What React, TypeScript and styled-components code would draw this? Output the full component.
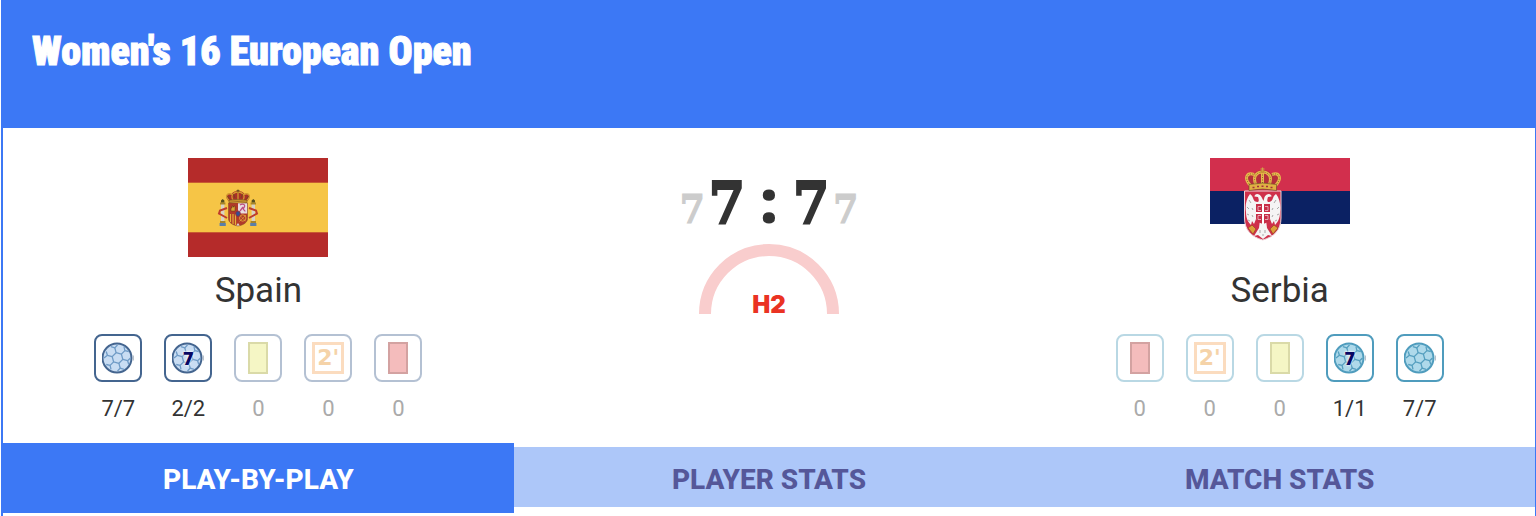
import { FC, ReactNode } from 'react';
import styled, { createGlobalStyle } from 'styled-components';

type Side = 'home' | 'away';
type StatKind = 'goal' | 'seven' | 'yellow' | 'suspension' | 'red';

interface StatItem {
  kind: StatKind;
  label: string;
  value: string;
}

const ballColors = {
  home: { line: '#44658f', seam: '#6f9bc6', fill: '#c9ddf3', off: '#b4c1d3' },
  away: { line: '#4f9cbd', seam: '#559fbf', fill: '#aed9ea', off: '#b9d8e4' },
};

const homeStats: StatItem[] = [
  { kind: 'goal', label: 'Goals', value: '7/7' },
  { kind: 'seven', label: '7-metre throws', value: '2/2' },
  { kind: 'yellow', label: 'Yellow cards', value: '0' },
  { kind: 'suspension', label: '2-minute suspensions', value: '0' },
  { kind: 'red', label: 'Red cards', value: '0' },
];

const awayStats: StatItem[] = [
  { kind: 'red', label: 'Red cards', value: '0' },
  { kind: 'suspension', label: '2-minute suspensions', value: '0' },
  { kind: 'yellow', label: 'Yellow cards', value: '0' },
  { kind: 'seven', label: '7-metre throws', value: '1/1' },
  { kind: 'goal', label: 'Goals', value: '7/7' },
];

const tabs = ['PLAY-BY-PLAY', 'PLAYER STATS', 'MATCH STATS'];

const SpainFlag: FC = () => (
  <FlagSvg viewBox="0 0 140 99" role="img" aria-label="Flag of Spain">
    <rect width="140" height="99" fill="#b52b2a" />
    <rect y="24.7" width="140" height="49.6" fill="#f6c546" />
    {/* pillars */}
    {[33, 63.6].map((x, i) => (
      <g key={x}>
        <rect x={x} y="46" width="3.4" height="17" fill="#d9d3c4" />
        <rect x={x - 1} y="44.5" width="5.4" height="2" fill="#a8862a" />
        <path d={`M${x} 44.500v-2l1.700-1.500 1.700 1.500v2z`} fill="#57501f" />
        <rect x={x - 1} y="63" width="5.4" height="2" fill="#a8862a" />
        <rect x={x - 1.4} y="65" width="6.2" height="3" fill="#5b7fa8" />
        <path
          d={i ? 'M61 50l7 2.500 1 3-8 4.500' : 'M39 50l-7 2.500-1 3 8 4.500'}
          fill="none"
          stroke="#bd3c2e"
          strokeWidth="2"
        />
      </g>
    ))}
    {/* crown */}
    <path d="M41 43.500c-5-5-2-9 2.500-7.500 1.500-2.500 4.500-3 6.500-3s5 .5 6.500 3c4.500-1.500 7.500 2.500 2.500 7.500z" fill="#a93127" />
    <path d="M41 42.500c-5-5-1-8 3-6M59 42.500c5-5 1-8-3-6M45 42c-3-5 1-8 5-8s8 3 5 8M50 34v8" fill="none" stroke="#d39a30" strokeWidth="1.300" />
    <path d="M39.500 38l2 3M60.500 38l-2 3M45.500 36l1.500 4M54.500 36l-1.500 4" stroke="#6b4a20" strokeWidth=".8" />
    <path d="M41 42.200q9-1.800 18 0v2.400q-9-1.800-18 0z" fill="#c7902e" stroke="#624b1e" strokeWidth=".5" />
    <path d="M50 31.500v3M48.500 32.600h3" stroke="#624b1e" strokeWidth=".9" />
    {/* shield */}
    <path d="M40.500 45h19v15.500c0 4-4 6.500-9.500 7.500-5.500-1-9.500-3.500-9.500-7.500z" fill="#b23a2a" />
    <path d="M50 45h9.500v10.500H50z" fill="#e9dbe1" />
    <path d="M52 47c3-2 6 0 4 2.500s1 2 1 4M52 53l3-4" fill="none" stroke="#bd4e83" strokeWidth="1.300" />
    <path d="M43 53v-3h1v-2h1v1h1v-1h1v5z" fill="#d9a637" stroke="#5c3c17" strokeWidth=".5" />
    <path d="M42.500 56v8M45 56v10M47.500 56v11.500" stroke="#e4b03b" strokeWidth="1.200" />
    <circle cx="54.700" cy="60" r="3.200" fill="none" stroke="#e4b03b" strokeWidth=".8" />
    <path d="M51.500 57l6.500 6.500M58 57l-6.500 6.500" stroke="#e4b03b" strokeWidth=".6" />
    <path d="M50 65l2 3h-4z" fill="#dbd2d5" />
    <ellipse cx="50" cy="55.700" rx="2.300" ry="2.800" fill="#334f91" stroke="#9c2b35" strokeWidth=".9" />
    <path d="M40.500 45h19v15.500c0 4-4 6.500-9.500 7.500-5.500-1-9.500-3.500-9.500-7.500z" fill="none" stroke="#8a4b25" strokeWidth=".6" />
  </FlagSvg>
);

const SerbiaFlag: FC = () => (
  <FlagSvg viewBox="0 0 140 99" role="img" aria-label="Flag of Serbia">
    <rect width="140" height="99" fill="#fff" />
    <rect width="140" height="33" fill="#d22f4d" />
    <rect y="33" width="140" height="33" fill="#0b2163" />
    {/* shield */}
    <path d="M34.500 33h36.500v27c0 12-7 19-18.250 22C41.500 79 34.500 72 34.500 60z" fill="#cf304b" stroke="#eed8dc" strokeWidth="1" />
    {/* eagle */}
    <g fill="#f5f4f4">
      <path d="M51.500 39c-2-4-7-4-7-.5l3.500.5c1 3 1 4 0 5-3 0-4-1-5-4-1-3-3-4-3-4-4 5-5 12-4 18 0 6 2 10 5 13l1-4 2 3 2-5 3 3h8l3-3 2 5 2-3 1 4c3-3 5-7 5-13 1-6 0-13-4-18 0 0-2 1-3 4-1 3-2 4-5 4-1-1-1-2 0-5l3.500-.5c0-3.500-5-3.500-7 .5l-1 4z" />
      <path d="M50 62h6l1 8 5 8-4-1-5 4-5-4-4 1 5-8z" />
    </g>
    <path d="M39 42l2 3M37 49l2 2M37 56l2 1M38 62l2 1M66 42l-2 3M69 49l-2 2M69 56l-2 1M67 62l-2 1M42 50l1 2M63 50l-1 2M42 57l1 2M63 57l-1 2M50 72v3M55 72v3M53 76v2" stroke="#888" strokeWidth=".7" />
    <path d="M38 70l4-3 4 4-3 5zM68 70l-4-3-4 4 3 5z" fill="#dca13a" stroke="#a3452a" strokeWidth=".8" />
    {/* cross */}
    <path d="M46 46h14v14c0 3-3 5-7 6-4-1-7-3-7-6z" fill="#c72d47" />
    <path d="M53 46v20M46 55h14" stroke="#fff" strokeWidth="2" />
    <path d="M51 48.500h-3v4h3M55 48.500h3v4h-3M51 57.500h-3v4h3M55 57.500h3v4h-3" fill="none" stroke="#f3d9df" strokeWidth=".7" />
    {/* crown */}
    <path d="M39 28c-6-8-2-14 5-12 2-3 5-4 8.500-4s7 1 9 4c7-2 11 4 5 12z" fill="#b52f3b" />
    <path d="M41 28c-8-8-4-14 3-11.500M65 28c8-8 4-14-3-11.500M46 27c-4-9 1-13 6.500-13s10.500 4 6.500 13M52.500 14v13" fill="none" stroke="#e6b94c" strokeWidth="3" />
    <path d="M41 28c-8-8-4-14 3-11.500M65 28c8-8 4-14-3-11.500M46 27c-4-9 1-13 6.500-13s10.500 4 6.500 13M52.500 14v13" fill="none" stroke="#614822" strokeWidth=".7" strokeDasharray="1 1.500" />
    <path d="M39 26.500q13.500-3 27.500 0v6q-14-3-27.500 0z" fill="#e0b044" stroke="#614822" strokeWidth=".6" />
    <path d="M42.500 29.500h2M47 28.500h2M51.500 28.200h2M56 28.500h2M60.500 29.500h2" stroke="#a3323b" strokeWidth="1.500" />
    <circle cx="52.500" cy="13.500" r="1.800" fill="#c89432" />
    <path d="M52.500 9.500v4M50.500 11h4" stroke="#d0a646" strokeWidth="1.200" />
  </FlagSvg>
);

const Ball: FC<{ side: Side }> = ({ side }) => {
  const { line, seam, fill } = ballColors[side];
  return (
    <svg width="32" height="32" viewBox="0 0 32 32" aria-hidden="true">
      <path d="M31.500 13.500v5" stroke="#b8c0c9" strokeWidth="1" />
      <circle cx="15" cy="16" r="14.500" fill={fill} stroke={line} strokeWidth="2" />
      <g fill="none" stroke={seam} strokeWidth="1.300" strokeLinejoin="round">
        <path d="M20.800 17.400L16.900 21.300 11.600 19.900 10.200 14.600 14.100 10.700 19.400 12.100z" />
        <path d="M20.800 17.400l4.800 1.300M16.900 21.300l1.300 4.800M11.600 19.900l-3.500 3.500M10.200 14.600l-4.800-1.300M14.100 10.700l-1.300-4.800M19.400 12.100l3.500-3.500" />
        <path d="M28.500 16l-2.900 2.700 1.200 3.800M22 27.300l-3.800-1.200-2.700 2.900M9 27.300l-.9-3.900-3.900-.9M2 16l3.400-2.700-1.200-3.800M9 4.700l3.800 1.200L15.500 3M22 4.700l.9 3.900 3.900.9" />
      </g>
    </svg>
  );
};

const StatIcon: FC<{ kind: StatKind; side: Side }> = ({ kind, side }) => {
  if (kind === 'yellow') return <PenaltyCard $fill="#f5f6c5" $edge="#dadaa8" />;
  if (kind === 'red') return <PenaltyCard $fill="#f4bcbc" $edge="#d3a2a1" />;
  if (kind === 'suspension') return <Suspension>2'</Suspension>;
  return (
    <BallIcon>
      <Ball side={side} />
      {kind === 'seven' && <BallNumber>7</BallNumber>}
    </BallIcon>
  );
};

interface TeamProps {
  name: string;
  side: Side;
  flag: ReactNode;
  stats: StatItem[];
}

const Team: FC<TeamProps> = ({ name, side, flag, stats }) => (
  <TeamColumn>
    {flag}
    <TeamName>{name}</TeamName>
    <StatList>
      {stats.map(({ kind, label, value }) => {
        const muted = value === '0';
        return (
          <Stat key={kind}>
            <Tile
              title={label}
              $edge={muted ? ballColors[side].off : ballColors[side].line}
            >
              <StatIcon kind={kind} side={side} />
            </Tile>
            <StatValue $muted={muted}>{value}</StatValue>
          </Stat>
        );
      })}
    </StatList>
  </TeamColumn>
);

const App: FC = () => (
  <>
    <GlobalStyle />
    <Page>
      <Header>
        <Title>Women's 16 European Open</Title>
      </Header>
      <Board>
        <Team name="Spain" side="home" flag={<SpainFlag />} stats={homeStats} />
        <ScoreColumn>
          <Score>
            <HalfScore>7</HalfScore>
            <Goals>7</Goals>
            <Colon>:</Colon>
            <Goals>7</Goals>
            <HalfScore>7</HalfScore>
          </Score>
          <Clock>
            <svg width="140" height="70" viewBox="0 0 140 70" aria-hidden="true">
              <path d="M6 70a64 64 0 0 1 128 0" fill="none" stroke="#f9cdcd" strokeWidth="12" />
            </svg>
            <Period>H2</Period>
          </Clock>
        </ScoreColumn>
        <Team name="Serbia" side="away" flag={<SerbiaFlag />} stats={awayStats} />
      </Board>
      <Tabs role="tablist">
        {tabs.map((tab, i) => (
          <Tab key={tab} type="button" role="tab" aria-selected={i === 0} $active={i === 0}>
            {tab}
          </Tab>
        ))}
      </Tabs>
    </Page>
  </>
);

export default App;

const GlobalStyle = createGlobalStyle`
  * {
    box-sizing: border-box;
  }

  body {
    margin: 0;
    background: #fff;
    color: #333;
    font-family: Roboto, 'Liberation Sans', sans-serif;
  }
`;

const Page = styled.main`
  min-height: 100vh;
  margin-left: 1px;
  border-left: 2px solid #3c78f5;
  border-right: 1px solid #3c78f5;
`;

const Header = styled.header`
  background: #3c78f5;
  padding: 24px 29px 48px;
`;

const Title = styled.h1`
  margin: 0;
  color: #fff;
  font-family: 'Roboto Condensed', Roboto, sans-serif;
  font-size: 40px;
  line-height: 56px;
  font-weight: 900;
  -webkit-text-stroke: 1px #fff;
`;

const Board = styled.section`
  display: grid;
  grid-template-columns: repeat(3, 1fr);
`;

const TeamColumn = styled.div`
  display: flex;
  flex-direction: column;
  align-items: center;
  padding: 30px 0 19px;
`;

const FlagSvg = styled.svg`
  display: block;
  width: 140px;
  height: 99px;
`;

const TeamName = styled.h2`
  margin: 12px 0 21px;
  font-size: 35px;
  line-height: 44px;
  font-weight: 400;
`;

const StatList = styled.ul`
  display: flex;
  gap: 22px;
  margin: 0;
  padding: 0;
  list-style: none;
`;

const Stat = styled.li`
  display: flex;
  flex-direction: column;
  align-items: center;
  gap: 12px;
  width: 48px;
`;

const Tile = styled.div<{ $edge: string }>`
  display: grid;
  place-items: center;
  width: 48px;
  height: 48px;
  border: 2px solid ${props => props.$edge};
  border-radius: 8px;
`;

const StatValue = styled.span<{ $muted: boolean }>`
  color: ${props => (props.$muted ? '#aaa' : '#333')};
  font-size: 22px;
  line-height: 30px;
`;

const BallIcon = styled.div`
  display: grid;
  place-items: center;
  width: 32px;
  height: 32px;

  > * {
    grid-area: 1 / 1;
  }
`;

const BallNumber = styled.span`
  color: #080863;
  font-family: 'Open Sans', sans-serif;
  font-size: 18px;
  line-height: 20px;
  font-weight: 800;
  text-shadow: 0 0 2px #fff, 0 0 3px #fff;
`;

const PenaltyCard = styled.div<{ $fill: string; $edge: string }>`
  width: 20px;
  height: 32px;
  background: ${props => props.$fill};
  border: 2px solid ${props => props.$edge};
`;

const Suspension = styled.div`
  display: grid;
  place-items: center;
  width: 32px;
  height: 32px;
  border: 3px solid #fbdcbf;
  color: #f5d3a8;
  font-family: 'DejaVu Sans', sans-serif;
  font-size: 22px;
  line-height: 24px;
  font-weight: 700;
`;

const ScoreColumn = styled.div`
  display: flex;
  flex-direction: column;
  align-items: center;
  padding-top: 36px;
`;

const Score = styled.div`
  display: flex;
  align-items: baseline;
  gap: 4px;
  height: 80px;
  font-family: 'DejaVu Serif Condensed', 'DejaVu Serif', serif;
  font-weight: 700;
  line-height: 72px;
`;

const Goals = styled.span`
  font-size: 58px;
  -webkit-text-stroke: 2px;
`;

const Colon = styled.span`
  width: 40px;
  font-family: 'Open Sans', sans-serif;
  font-size: 60px;
  font-weight: 800;
  text-align: center;
`;

const HalfScore = styled.span`
  color: #ccc;
  font-size: 40px;
  -webkit-text-stroke: 1px;
`;

const Clock = styled.div`
  display: grid;
  justify-items: center;
  align-items: end;

  > * {
    grid-area: 1 / 1;
  }
`;

const Period = styled.strong`
  color: #ea3323;
  font-family: Inter, sans-serif;
  font-size: 24px;
  line-height: 18px;
  font-weight: 900;
`;

const Tabs = styled.nav`
  display: grid;
  grid-template-columns: repeat(3, 1fr);
  align-items: start;
`;

const Tab = styled.button<{ $active: boolean }>`
  height: ${props => (props.$active ? '70px' : '60px')};
  margin: ${props => (props.$active ? '0' : '4px 0 0')};
  padding: ${props => (props.$active ? '4px' : '6px')} 0 0;
  border: 0;
  background: ${props => (props.$active ? '#3c78f5' : '#adc7f9')};
  color: ${props => (props.$active ? '#fff' : '#555799')};
  font-family: Roboto, sans-serif;
  font-size: 28px;
  line-height: 32px;
  font-weight: 800;
`;
